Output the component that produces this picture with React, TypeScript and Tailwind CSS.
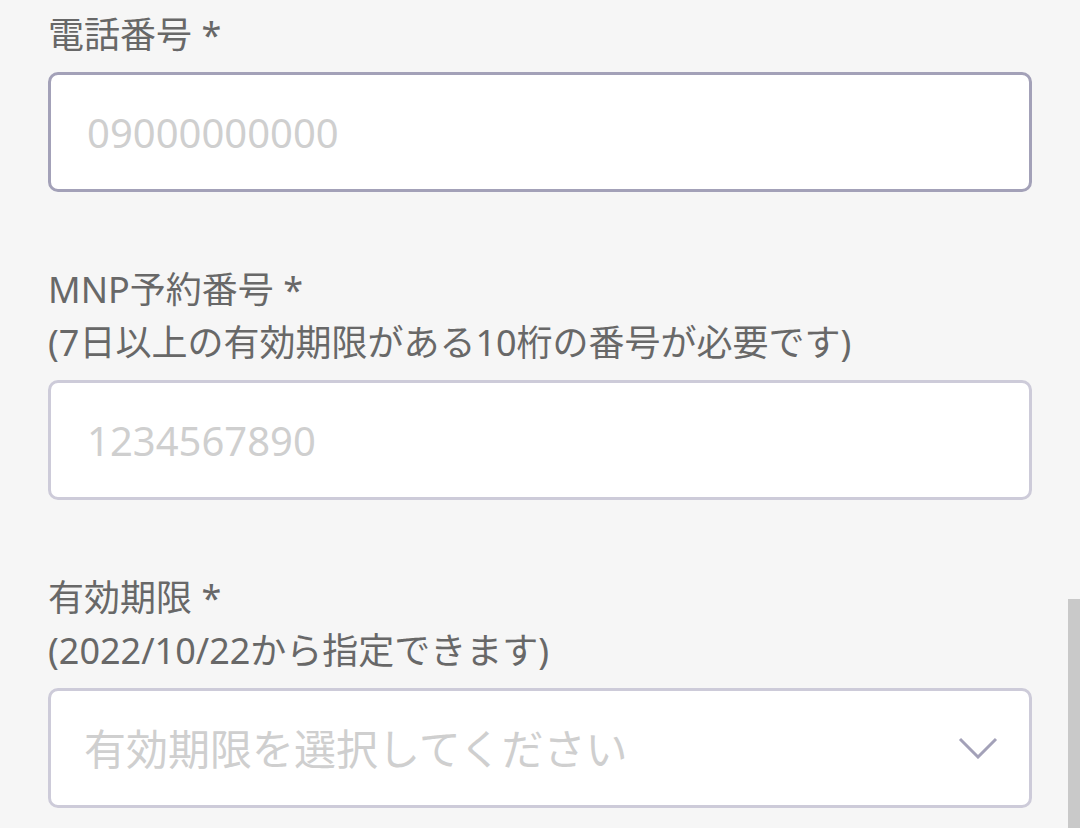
import { useState } from 'react'

const font = 'font-["Noto_Sans","Noto_Sans_CJK_JP",sans-serif]'

interface FieldProps {
  label: string
  note?: string
  children: React.ReactNode
}

function Field({ label, note, children }: FieldProps) {
  return (
    <div className="mb-[71px]">
      <div className="mb-[11px] text-[36px] leading-[53px] text-[#686868]">
        <p>{label} *</p>
        {note && <p>{note}</p>}
      </div>
      {children}
    </div>
  )
}

export default function App() {
  const [phone, setPhone] = useState('')
  const [mnp, setMnp] = useState('')

  return (
    <div className={`relative h-[828px] overflow-hidden bg-[#f6f6f6] ${font}`}>
      <form className="px-12 pt-[8px]">
        <Field label="電話番号">
          <input
            value={phone}
            onChange={(e) => setPhone(e.target.value)}
            placeholder="09000000000"
            className="block h-[120px] w-full rounded-[10px] border-[3px] border-[#a3a1b8] bg-white pl-[36px] text-[40px] text-[#444] outline-none placeholder:text-[#cfcfcf]"
          />
        </Field>

        <Field label="MNP予約番号" note="(7日以上の有効期限がある10桁の番号が必要です)">
          <input
            value={mnp}
            onChange={(e) => setMnp(e.target.value)}
            placeholder="1234567890"
            className="block h-[120px] w-full rounded-[10px] border-[3px] border-[#cdcbd9] bg-white pl-[36px] text-[40px] text-[#444] outline-none placeholder:text-[#cfcfcf]"
          />
        </Field>

        <Field label="有効期限" note="(2022/10/22から指定できます)">
          <button
            type="button"
            className="flex h-[120px] w-full items-center justify-between rounded-[10px] border-[3px] border-[#cdcbd9] bg-white pl-[33px] pr-[31px] text-left"
          >
            <span className="text-[42px] text-[#cfcfcf]">有効期限を選択してください</span>
            <svg width="40" height="22" viewBox="0 0 40 22" fill="none">
              <path d="M2 2 L20 20 L38 2" stroke="#a3a1b8" strokeWidth="3" />
            </svg>
          </button>
        </Field>
      </form>

      {/* scroll thumb */}
      <div className="absolute right-0 top-[599px] h-[229px] w-[12px] bg-[#c9c9c9]" />
    </div>
  )
}
